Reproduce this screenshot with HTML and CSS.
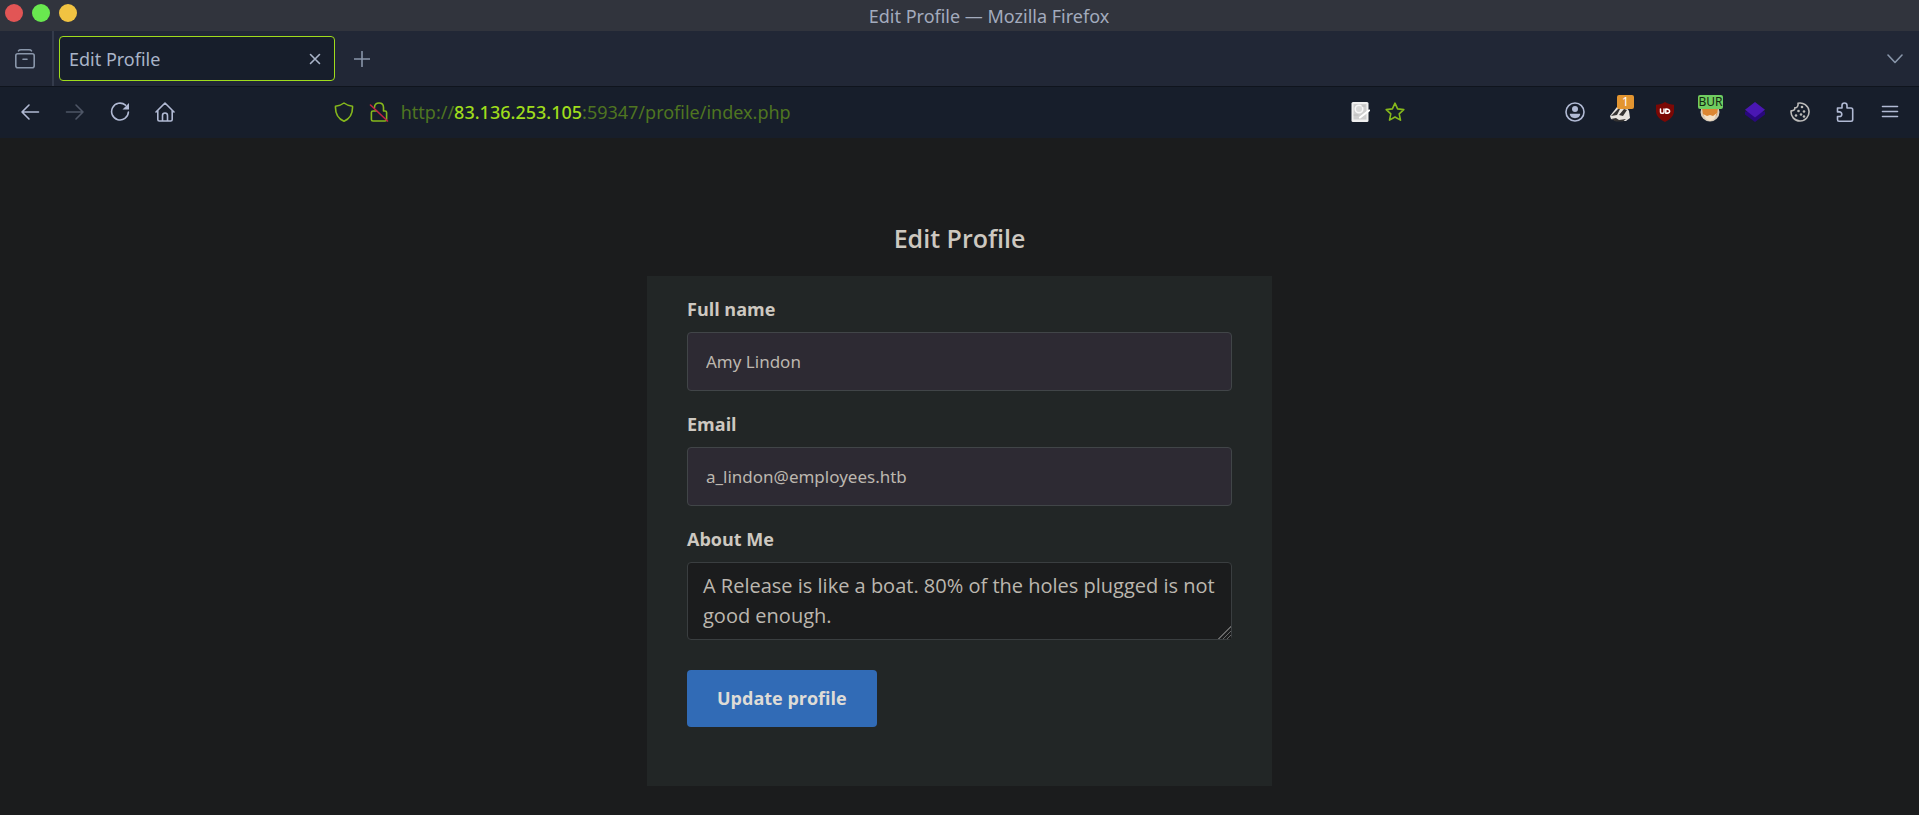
FILE: index.html
```html
<!DOCTYPE html>
<html lang="en">
<head>
<meta charset="utf-8">
<title>Edit Profile</title>
<link rel="stylesheet" href="styles.css">
</head>
<body>
<header class="browser">
  <div class="titlebar">
    <div class="lights">
      <button class="light light-close" aria-label="Close window"></button>
      <button class="light light-max" aria-label="Maximize window"></button>
      <button class="light light-min" aria-label="Minimize window"></button>
    </div>
    <div class="window-title">Edit Profile — Mozilla Firefox</div>
  </div>
  <div class="tabbar">
    <button class="tab-side" aria-label="Firefox View">
      <svg class="icon" viewBox="0 0 20 20"><path d="M3.5 1.800C4 1 4.500.8 6 .8h8c1.500 0 2 .2 2.500 1"/><rect x=".8" y="4.800" width="18.400" height="14" rx="2"/><path d="M8 10.200h4"/></svg>
    </button>
    <div class="tab">
      <span class="tab-label">Edit Profile</span>
      <button class="tab-close" aria-label="Close tab">
        <svg class="icon-small" viewBox="0 0 12 12"><path d="M1.500 1.500l9 9M10.500 1.500l-9 9"/></svg>
      </button>
    </div>
    <button class="new-tab" aria-label="New tab">
      <svg class="icon-mid" viewBox="0 0 16 16"><path d="M8 .5v15M.5 8h15"/></svg>
    </button>
    <button class="tab-list" aria-label="List all tabs">
      <svg class="icon-mid" viewBox="0 0 16 16"><path d="M1 4l7 7.500L15 4"/></svg>
    </button>
  </div>
  <nav class="toolbar" aria-label="Navigation">
    <div class="tools">
      <button class="tool" aria-label="Back"><svg class="icon" viewBox="0 0 20 20"><path d="M18.500 10H2M9 3L2 10l7 7"/></svg></button>
      <button class="tool dim" aria-label="Forward"><svg class="icon" viewBox="0 0 20 20"><path d="M1.500 10H18M11 3l7 7-7 7"/></svg></button>
      <button class="tool" aria-label="Reload"><svg class="icon" viewBox="0 0 20 20"><path d="M15.500 3.200A8.400 8.400 0 1 0 18.400 10"/><path class="solid" d="M19 1v6.500h-6.500z"/></svg></button>
      <button class="tool" aria-label="Home"><svg class="icon" viewBox="0 0 20 20"><path d="M1 10l9-9 9 9M2.800 8.500v9c0 1 .6 1.500 1.500 1.500h11.400c.9 0 1.500-.5 1.500-1.500v-9M7.500 19v-5.500a2.500 2.500 0 0 1 5 0V19"/></svg></button>
    </div>
    <div class="spring"></div>
    <div class="urlbar">
      <button class="url-tool" aria-label="Tracking protection"><svg class="icon" viewBox="0 0 20 20"><path d="M10 1C7.500 3 4.500 3.800 1.500 4.200c-.3 6 1.500 12 8.500 15 7-3 8.800-9 8.500-15C15.500 3.800 12.500 3 10 1z"/></svg></button>
      <button class="url-tool" aria-label="Connection not secure"><svg class="icon" viewBox="0 0 20 20"><path d="M5.500 5.500C5.500 2.500 7.300 1 10 1s4.500 1.700 4.500 4.500V9h1.500c1 0 1.600.6 1.600 1.600v6.800c0 1-.6 1.600-1.600 1.600H4c-1 0-1.600-.6-1.600-1.600v-6.800C2.400 9.600 3 9 4 9h3.500"/><path class="slash" d="M1.500 3l17 16"/></svg></button>
      <div class="url">http://<b>83.136.253.105</b>:59347/profile/index.php</div>
      <button class="url-tool" aria-label="Translate page"><svg class="icon" viewBox="0 0 20 20"><rect class="paper" x="1.500" y="0" width="17" height="20" rx="1.500"/><rect class="paper-in" x="3.500" y="2" width="13" height="15.500"/><circle class="lens" cx="9" cy="7" r="3.800"/><path class="pen" d="M19 8.500L10 15.500"/><path class="clip" d="M4 13h4M12 4h3"/></svg></button>
      <button class="url-tool" aria-label="Bookmark this page"><svg class="icon" viewBox="0 0 20 20"><path d="M10 1.200l2.600 5.700 6.200.7-4.600 4.200 1.300 6.300L10 15l-5.500 3.100 1.300-6.300L1.200 7.600l6.200-.7z"/></svg></button>
    </div>
    <div class="spring"></div>
    <div class="tools">
      <button class="tool" aria-label="Account"><svg class="icon" viewBox="0 0 20 20"><circle cx="10" cy="10" r="9"/><circle class="solid" cx="10" cy="7" r="3"/><path class="solid" d="M4.800 11.800h10.400c0 2.800-2.200 4.400-5.200 4.400s-5.200-1.600-5.200-4.400z"/></svg></button>
      <button class="tool" aria-label="Privacy Badger"><svg class="icon" viewBox="0 0 20 20"><path class="fur" d="M0 14L7 5l7-3 5 7 1 7-4 3H7L1 17z"/><path class="ink" d="M1 14l7-7 3-2-4 8zM9 13l5-6 3 1-4 6zM1 17l5-1 3 2 7-1-3 2.500H6z"/></svg><span class="badge badge-count">1</span></button>
      <button class="tool" aria-label="uBlock Origin"><svg class="icon" viewBox="0 0 20 20"><path class="ublock" d="M10 0c3 2 6 2.700 9 2.800V9c0 5-4 8.500-9 11-5-2.500-9-6-9-11V2.800C4 2.700 7 2 10 0z"/><path class="mark" d="M5.500 7v3.200c0 1.500 3.500 1.500 3.500 0V7M10.800 7v4.300c5.200.4 5-4.600 0-4.300z"/></svg></button>
      <button class="tool" aria-label="FoxyProxy"><svg class="icon" viewBox="0 0 20 20"><circle class="fox-rim" cx="10" cy="10" r="9.500"/><path class="fox" d="M2 6h16l-1 7-7 5-7-5z"/><path class="fox-face" d="M3 12l4 2 3-1 3 1 4-3-3 6-4 2-4-2z"/></svg><span class="badge badge-proxy">BUR</span></button>
      <button class="tool" aria-label="Wappalyzer"><svg class="icon" viewBox="0 0 20 20"><path class="gem-low" d="M0 9.500v3L10 20l10-7.500v-3z"/><path class="gem" d="M10 0l10 7.800-10 7.700L0 7.800z"/></svg></button>
      <button class="tool cookie" aria-label="Cookie editor"><svg class="icon" viewBox="0 0 20 20"><path d="M8 1.200a9 9 0 1 1-6.900 7.600C3.500 9 5 8 4.800 5.800 7 6 8.500 4 8 1.200z"/><g class="dots"><circle cx="12" cy="5" r="1.300"/><circle cx="8.500" cy="9" r="1.300"/><circle cx="14" cy="9.500" r="1.300"/><circle cx="6" cy="13.500" r="1.300"/><circle cx="11" cy="12.500" r="1.300"/><circle cx="14" cy="14.500" r="1.300"/></g></svg></button>
      <button class="tool" aria-label="Extensions"><svg class="icon" viewBox="0 0 20 20"><path d="M2.500 6H7V3.500a2.500 2.500 0 0 1 5 0V6h4c1 0 1.700.7 1.700 1.700V17.500c0 1-.7 1.700-1.700 1.700H4c-1 0-1.500-.7-1.500-1.700V14.500h2a2.300 2.300 0 0 0 0-4.600h-2z"/></svg></button>
      <button class="tool" aria-label="Menu"><svg class="icon" viewBox="0 0 20 20"><path d="M2.500 4.500h15M2.500 9.500h15M2.500 14.500h15"/></svg></button>
    </div>
  </nav>
</header>
<main class="page">
  <h1 class="heading">Edit Profile</h1>
  <form class="card">
    <label class="label" for="name">Full name</label>
    <input class="field" id="name" type="text" value="Amy Lindon">
    <label class="label" for="email">Email</label>
    <input class="field" id="email" type="email" value="a_lindon@employees.htb">
    <label class="label" for="about">About Me</label>
    <textarea class="about" id="about" rows="2" spellcheck="false">A Release is like a boat. 80% of the holes plugged is not good enough.</textarea>
    <button class="submit" type="button">Update profile</button>
  </form>
</main>
</body>
</html>
```
FILE: styles.css
```css
* { box-sizing: border-box; }
body {
  margin: 0;
  min-height: 100vh;
  background: #1b1c1d;
  color: #cdc8c0;
  font-family: "Open Sans", "Noto Sans", sans-serif;
}
button {
  display: flex;
  align-items: center;
  justify-content: center;
  padding: 0;
  border: 0;
  background: none;
  color: inherit;
  font: inherit;
}
svg {
  display: block;
  fill: none;
  stroke: currentColor;
  stroke-width: 1.6;
  stroke-linecap: round;
  stroke-linejoin: round;
}
.icon { width: 20px; height: 20px; }
.icon-mid { width: 16px; height: 16px; }
.icon-small { width: 12px; height: 12px; }
.solid { fill: currentColor; stroke: none; }

/* Browser chrome */
.browser { font-family: "Noto Sans", sans-serif; }
.titlebar {
  display: grid;
  grid-template-columns: 1fr auto 1fr;
  align-items: center;
  height: 31px;
  padding: 0 5px;
  background: #31343d;
  color: #a3abbd;
  font-size: 18px;
  line-height: 24px;
}
.lights { display: flex; gap: 9px; padding-bottom: 5px; }
.light { width: 18px; height: 18px; border-radius: 50%; }
.light-close { background: #e25555; }
.light-max { background: #69e84f; }
.light-min { background: #f1c342; }
.window-title { padding-left: 59px; padding-right: 0; margin-right: 0; }
.tabbar {
  display: flex;
  align-items: center;
  height: 55px;
  padding-right: 16px;
  background: #212736;
  color: #8996aa;
}
.tab-side { align-self: stretch; width: 54px; padding-right: 3px; border-right: 2px solid #343b4b; }
.tab {
  display: flex;
  align-items: center;
  justify-content: space-between;
  width: 276px;
  height: 45px;
  margin-left: 5px;
  padding: 0 13px 0 9px;
  border: 1px solid #9fdc1c;
  border-radius: 4px;
  background: #171e2b;
  color: #a9b4c8;
  font-size: 18px;
}
.new-tab { width: 54px; height: 45px; }
.tab-list { margin-left: auto; }
.toolbar {
  display: flex;
  align-items: center;
  height: 52px;
  padding: 0 7px 2px;
  border-top: 1px solid #0f141d;
  background: #171e2b;
  color: #b1bad4;
}
.tools { display: flex; }
.tool { position: relative; width: 45px; height: 45px; }
.dim { color: #4e5666; }
.spring { flex: 1; }
.urlbar {
  display: flex;
  align-items: center;
  flex: 8;
  padding: 0 4px;
  color: #86b81c;
}
.url-tool { width: 35px; height: 40px; }
.url {
  flex: 1;
  padding-left: 4px;
  color: #4f7521;
  font-size: 18px;
  line-height: 26px;
}
.url b { color: #9fdc1c; font-weight: 500; }
.slash { stroke: #c42545; }
.paper { fill: #f0f0f0; stroke: none; }
.paper-in { fill: #cfcfcf; stroke: none; }
.lens { fill: #d9d9d9; stroke: #f7f7f7; }
.pen { stroke: #fff; stroke-width: 2.200; }
.clip { stroke: #bcbcbc; stroke-width: 1; }
.badge {
  position: absolute;
  top: 6px;
  font-size: 12px;
  line-height: 14px;
  border-radius: 2px;
}
.badge-count { left: 20px; width: 17px; background: #e39530; color: #fff; }
.badge-proxy { left: 11px; min-width: 25px; background: #70cd61; color: #13290f; }
.fur { fill: #e8e4df; stroke: none; }
.ink { fill: #353332; stroke: none; }
.ublock { fill: #7b0805; stroke: none; }
.mark { stroke: #fff; stroke-width: 1.500; }
.fox-rim { fill: #d9cdbb; stroke: none; }
.fox { fill: #dd8732; stroke: none; }
.fox-face { fill: #f6e1c5; stroke: none; }
.gem { fill: #4a17b3; stroke: none; }
.gem-low { fill: #29087c; stroke: none; }
.cookie { color: #bdbcba; }
.dots { fill: currentColor; stroke: none; }

/* Profile page */
.page {
  display: flex;
  flex-direction: column;
  align-items: center;
  padding: 82px 16px 29px;
}
.heading {
  margin: 0 0 20px;
  font-size: 25px;
  font-weight: 600;
  line-height: 36px;
}
.card {
  display: flex;
  flex-direction: column;
  width: 100%;
  max-width: 625px;
  padding: 20px 40px 59px;
  background: #222626;
}
.label {
  margin-bottom: 9px;
  font-size: 18px;
  font-weight: 700;
  line-height: 27px;
}
.field {
  height: 59px;
  margin-bottom: 20px;
  padding: 0 18px;
  border: 1px solid #414548;
  border-radius: 4px;
  background: #2d2a33;
  color: #bcb7af;
  font: 17px "Noto Sans", sans-serif;
}
.about {
  height: 78px;
  margin-bottom: 30px;
  padding: 8px 15px;
  border: 1px solid #3a3e40;
  border-radius: 4px;
  background: #1b1c1d;
  color: #bcb7af;
  font: 20px/30px "Open Sans", sans-serif;
  overflow: hidden;
  resize: vertical;
}
.about::-webkit-resizer {
  background:
    linear-gradient(135deg, #1b1c1d 50%, transparent 50%),
    repeating-linear-gradient(135deg, #666 0 1px, #1b1c1d 1px 3px);
}
.submit {
  align-self: flex-start;
  padding: 15px 30px;
  border-radius: 4px;
  background: #316bb6;
  color: #dedbd6;
  font-size: 18px;
  font-weight: 700;
  line-height: 27px;
}
```
